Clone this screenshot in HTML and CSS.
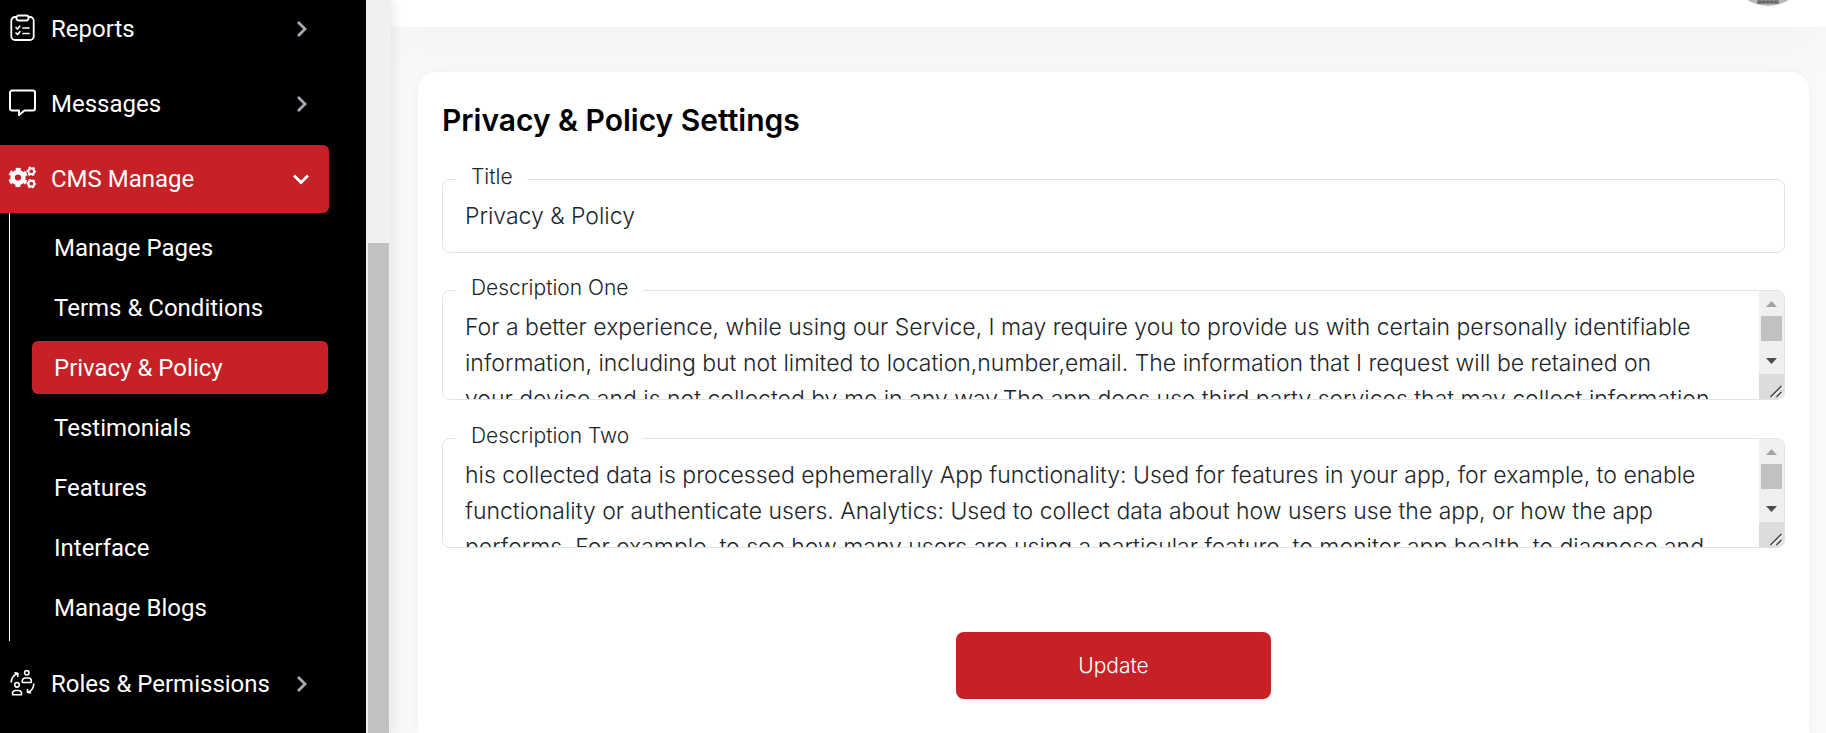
FILE: index.html
```html
<!DOCTYPE html>
<html lang="en">
<head>
<meta charset="utf-8">
<title>Privacy &amp; Policy Settings</title>
<link rel="stylesheet" href="styles.css">
</head>
<body>
<div class="layout">
  <aside class="sidebar">
    <nav class="menu">
      <a class="menu-item" href="#">
        <svg class="menu-icon" viewBox="0 0 28 28" fill="none" stroke="currentColor" stroke-width="1.800" stroke-linecap="round" stroke-linejoin="round"><path d="M7.500 2H6a3.700 3.700 0 0 0-3.700 3.700v15.600A3.700 3.700 0 0 0 6 25h15a3.700 3.700 0 0 0 3.700-3.700V5.700A3.700 3.700 0 0 0 21 2H19.500"/><rect x="7.500" y=".5" width="12" height="5" rx="2"/><path d="M7 12.500l1.500 1.500 2.300-2.800M7 18l1.500 1.500 2.300-2.800M14 13h6M14 18.500h6" stroke-width="1.700"/></svg>
        <span class="menu-text">Reports</span>
        <svg class="chevron" viewBox="0 0 18 18" fill="none" stroke="currentColor" stroke-width="2.800"><path d="M6 2l7 7-7 7"/></svg>
      </a>
      <a class="menu-item" href="#">
        <svg class="menu-icon" viewBox="0 0 28 28" fill="none" stroke="currentColor" stroke-width="2" stroke-linejoin="round"><path d="M3 .5h21a2 2 0 0 1 2 2v16a2 2 0 0 1-2 2h-8.500L10 25v-4.500H3a2 2 0 0 1-2-2v-16a2 2 0 0 1 2-2z"/></svg>
        <span class="menu-text">Messages</span>
        <svg class="chevron" viewBox="0 0 18 18" fill="none" stroke="currentColor" stroke-width="2.800"><path d="M6 2l7 7-7 7"/></svg>
      </a>
      <a class="menu-item menu-item-open" href="#">
        <svg class="menu-icon" viewBox="0 0 28 28" fill="none" stroke="currentColor"><circle cx="9" cy="12.500" r="5.400" stroke-width="4.600"/><circle cx="9" cy="12.500" r="8.300" stroke-width="2.800" stroke-dasharray="4.700 3.992" stroke-dashoffset="2.350" transform="rotate(30 9 12.500)"/><g stroke-width="2"><circle cx="22.300" cy="6.300" r="2.900"/><circle cx="22.300" cy="18.700" r="2.900"/></g><g stroke-width="1.400" stroke-dasharray="2.300 1.993" stroke-dashoffset="1.150"><circle cx="22.300" cy="6.300" r="4.100"/><circle cx="22.300" cy="18.700" r="4.100"/></g></svg>
        <span class="menu-text">CMS Manage</span>
        <svg class="chevron" viewBox="0 0 18 18" fill="none" stroke="currentColor" stroke-width="2.800"><path d="M2 5.500l7 7 7-7"/></svg>
      </a>
      <div class="submenu">
        <a class="submenu-item" href="#">Manage Pages</a>
        <a class="submenu-item" href="#">Terms &amp; Conditions</a>
        <a class="submenu-item submenu-item-active" href="#">Privacy &amp; Policy</a>
        <a class="submenu-item" href="#">Testimonials</a>
        <a class="submenu-item" href="#">Features</a>
        <a class="submenu-item" href="#">Interface</a>
        <a class="submenu-item" href="#">Manage Blogs</a>
      </div>
      <a class="menu-item" href="#">
        <svg class="menu-icon" viewBox="0 0 28 28" fill="none" stroke="currentColor" stroke-width="1.600" stroke-linecap="round" stroke-linejoin="round"><circle cx="17.800" cy="2.800" r="2.200"/><path d="M13.300 12.500v-1.700a2.800 2.800 0 0 1 2.800-2.800h3.400a2.800 2.800 0 0 1 2.800 2.800v1.700z"/><circle cx="8" cy="14.800" r="2.300"/><path d="M3.500 24.800v-1.500a2.800 2.800 0 0 1 2.800-2.800h3.400a2.800 2.800 0 0 1 2.800 2.800v1.500z"/><path d="M2.200 12C2.500 8 4.500 5 8.500 3.500M6 2.800l2.800.5V6.500M24.800 14c-.3 4-2.500 7-6 8.500M21.500 22.800L18.500 22.500V19.500"/></svg>
        <span class="menu-text">Roles &amp; Permissions</span>
        <svg class="chevron" viewBox="0 0 18 18" fill="none" stroke="currentColor" stroke-width="2.800"><path d="M6 2l7 7-7 7"/></svg>
      </a>
    </nav>
    <div class="sidebar-track"><div class="sidebar-thumb"></div></div>
  </aside>
  <div class="page">
    <header class="topbar">
      <svg class="avatar" viewBox="0 0 76 76"><circle cx="38" cy="38" r="38" fill="#b8b8b8"/><path d="M27 60h22v14H27z" fill="#858585"/><path d="M28 72h20" stroke="#444" stroke-width="1" stroke-dasharray="3 1"/></svg>
    </header>
    <main class="content">
      <form class="card">
        <h1 class="card-title">Privacy &amp; Policy Settings</h1>
        <div class="field">
          <label class="field-label" for="title">Title</label>
          <input class="control" id="title" type="text" value="Privacy &amp; Policy">
        </div>
        <div class="field field-area">
          <label class="field-label" for="desc-one">Description One</label>
          <textarea class="control control-area" id="desc-one">For a better experience, while using our Service, I may require you to provide us with certain personally identifiable
information, including but not limited to location,number,email. The information that I request will be retained on
your device and is not collected by me in any way.The app does use third party services that may collect information
used to identify you.</textarea>
          <div class="scroll" aria-hidden="true">
            <svg class="scroll-button scroll-button-off" viewBox="0 0 25 25"><path d="M7 16l5.500-6 5.500 6z"/></svg>
            <div class="scroll-thumb"></div>
            <svg class="scroll-button scroll-button-down" viewBox="0 0 25 25"><path d="M7 9l5.500 6L18 9z"/></svg>
            <svg class="scroll-corner" viewBox="0 0 25 25" fill="none" stroke-width="1.500"><path d="M13 23.500L24 12.500M19 23.500l5-5" stroke="#fff"/><path d="M11.500 23L22.500 12M17.500 23l5-5" stroke="#444"/></svg>
          </div>
        </div>
        <div class="field field-area">
          <label class="field-label" for="desc-two">Description Two</label>
          <textarea class="control control-area" id="desc-two">his collected data is processed ephemerally App functionality: Used for features in your app, for example, to enable
functionality or authenticate users. Analytics: Used to collect data about how users use the app, or how the app
performs. For example, to see how many users are using a particular feature, to monitor app health, to diagnose and
fix bugs or crashes.</textarea>
          <div class="scroll" aria-hidden="true">
            <svg class="scroll-button scroll-button-off" viewBox="0 0 25 25"><path d="M7 16l5.500-6 5.500 6z"/></svg>
            <div class="scroll-thumb"></div>
            <svg class="scroll-button scroll-button-down" viewBox="0 0 25 25"><path d="M7 9l5.500 6L18 9z"/></svg>
            <svg class="scroll-corner" viewBox="0 0 25 25" fill="none" stroke-width="1.500"><path d="M13 23.500L24 12.500M19 23.500l5-5" stroke="#fff"/><path d="M11.500 23L22.500 12M17.500 23l5-5" stroke="#444"/></svg>
          </div>
        </div>
        <button class="submit" type="submit">Update</button>
      </form>
    </main>
  </div>
</div>
</body>
</html>
```
FILE: styles.css
```css
* { box-sizing: border-box; }
body { margin: 0; overflow: hidden; background: #f9f9f9; font-family: Inter, "Open Sans", sans-serif; }
.layout { display: flex; height: 100vh; }
.sidebar { display: flex; flex: none; background: #000; box-shadow: 0 0 12px rgba(40, 50, 90, 0.15); z-index: 2; }
.menu { display: flex; flex-direction: column; width: 366px; margin-top: -5px; padding-right: 37px; font-family: Roboto, sans-serif; font-size: 24px; line-height: 28px; }
.menu-item { display: flex; flex: none; align-items: center; height: 68px; margin-bottom: 7px; padding: 0 19px 0 9px; color: #fff; text-decoration: none; border-radius: 0 6px 6px 0; }
.menu-item-open { margin-bottom: 0; background: #c52127; }
.menu-icon { flex: none; width: 28px; height: 28px; margin-right: 14px; overflow: visible; }
.menu-text { flex: 1; }
.chevron { width: 18px; height: 18px; color: #a7abb3; }
.menu-item-open .chevron { color: #fff; }
.submenu { display: flex; flex-direction: column; gap: 7px; margin: 0 1px 9px 9px; padding: 8px 0 7px 22px; border-left: 1px solid #fff; }
.submenu-item { height: 53px; padding: 0 22px; color: #fff; line-height: 55px; text-decoration: none; border-radius: 6px; }
.submenu-item-active { background: #c52127; }
.sidebar-track { width: 25px; padding: 243px 2px 0; background: #f0f0f0; }
.sidebar-thumb { height: 100%; background: #c1c1c1; }
.page { display: flex; flex: 1; flex-direction: column; min-width: 0; }
.topbar { display: flex; flex: none; align-items: flex-end; justify-content: flex-end; height: 27px; padding: 0 20px 21px; background: #fff; box-shadow: 0 0 75px rgba(0, 0, 0, 0.07); }
.avatar { flex: none; width: 76px; height: 76px; }
.content { flex: 1; padding: 45px 17px 0 27px; }
.card { display: flex; flex-direction: column; min-height: 100%; padding: 28px 24px 0; background: #fff; border-radius: 18px 18px 0 0; box-shadow: 0 0 12px rgba(0, 0, 0, 0.03); }
.card-title { margin: 0 0 39px; color: #000; font-size: 30px; font-weight: 600; line-height: 40px; }
.field { position: relative; display: flex; margin-bottom: 37px; }
.field-area { margin-bottom: 38px; }
.field-label { position: absolute; top: -16px; left: 15px; padding: 0 14px; background: #fff; color: #212529; font-size: 21px; font-weight: 300; line-height: 28px; }
.control { width: 100%; height: 74px; padding: 0 22px; background: #fff; border: 1px solid #e2e3e4; border-radius: 8px; color: #212529; font: 300 23px/36px Inter, "Open Sans", sans-serif; outline: none; }
.control-area { height: 110px; padding: 18px 30px 0 22px; overflow: hidden; resize: none; }

/* Scroll column drawn over the right edge of a text area */
.scroll { position: absolute; top: 1px; right: 1px; bottom: 1px; display: flex; flex-direction: column; width: 25px; overflow: hidden; background: #f0f0f0; border-radius: 0 7px 7px 0; }
.scroll-button, .scroll-corner { flex: none; width: 25px; height: 25px; }
.scroll-button { fill: #4d4d4d; }
.scroll-button-off { fill: #a3a3a3; }
.scroll-button-down { margin-top: auto; }
.scroll-thumb { flex: none; height: 25px; margin: 0 2px; background: #c1c1c1; }
.scroll-corner { background: #dcdcdc; }

.submit { align-self: center; width: 315px; height: 67px; margin-top: 46px; background: #c52127; border: 0; border-radius: 8px; color: #fff; font: 300 21px Inter, "Open Sans", sans-serif; }
```
